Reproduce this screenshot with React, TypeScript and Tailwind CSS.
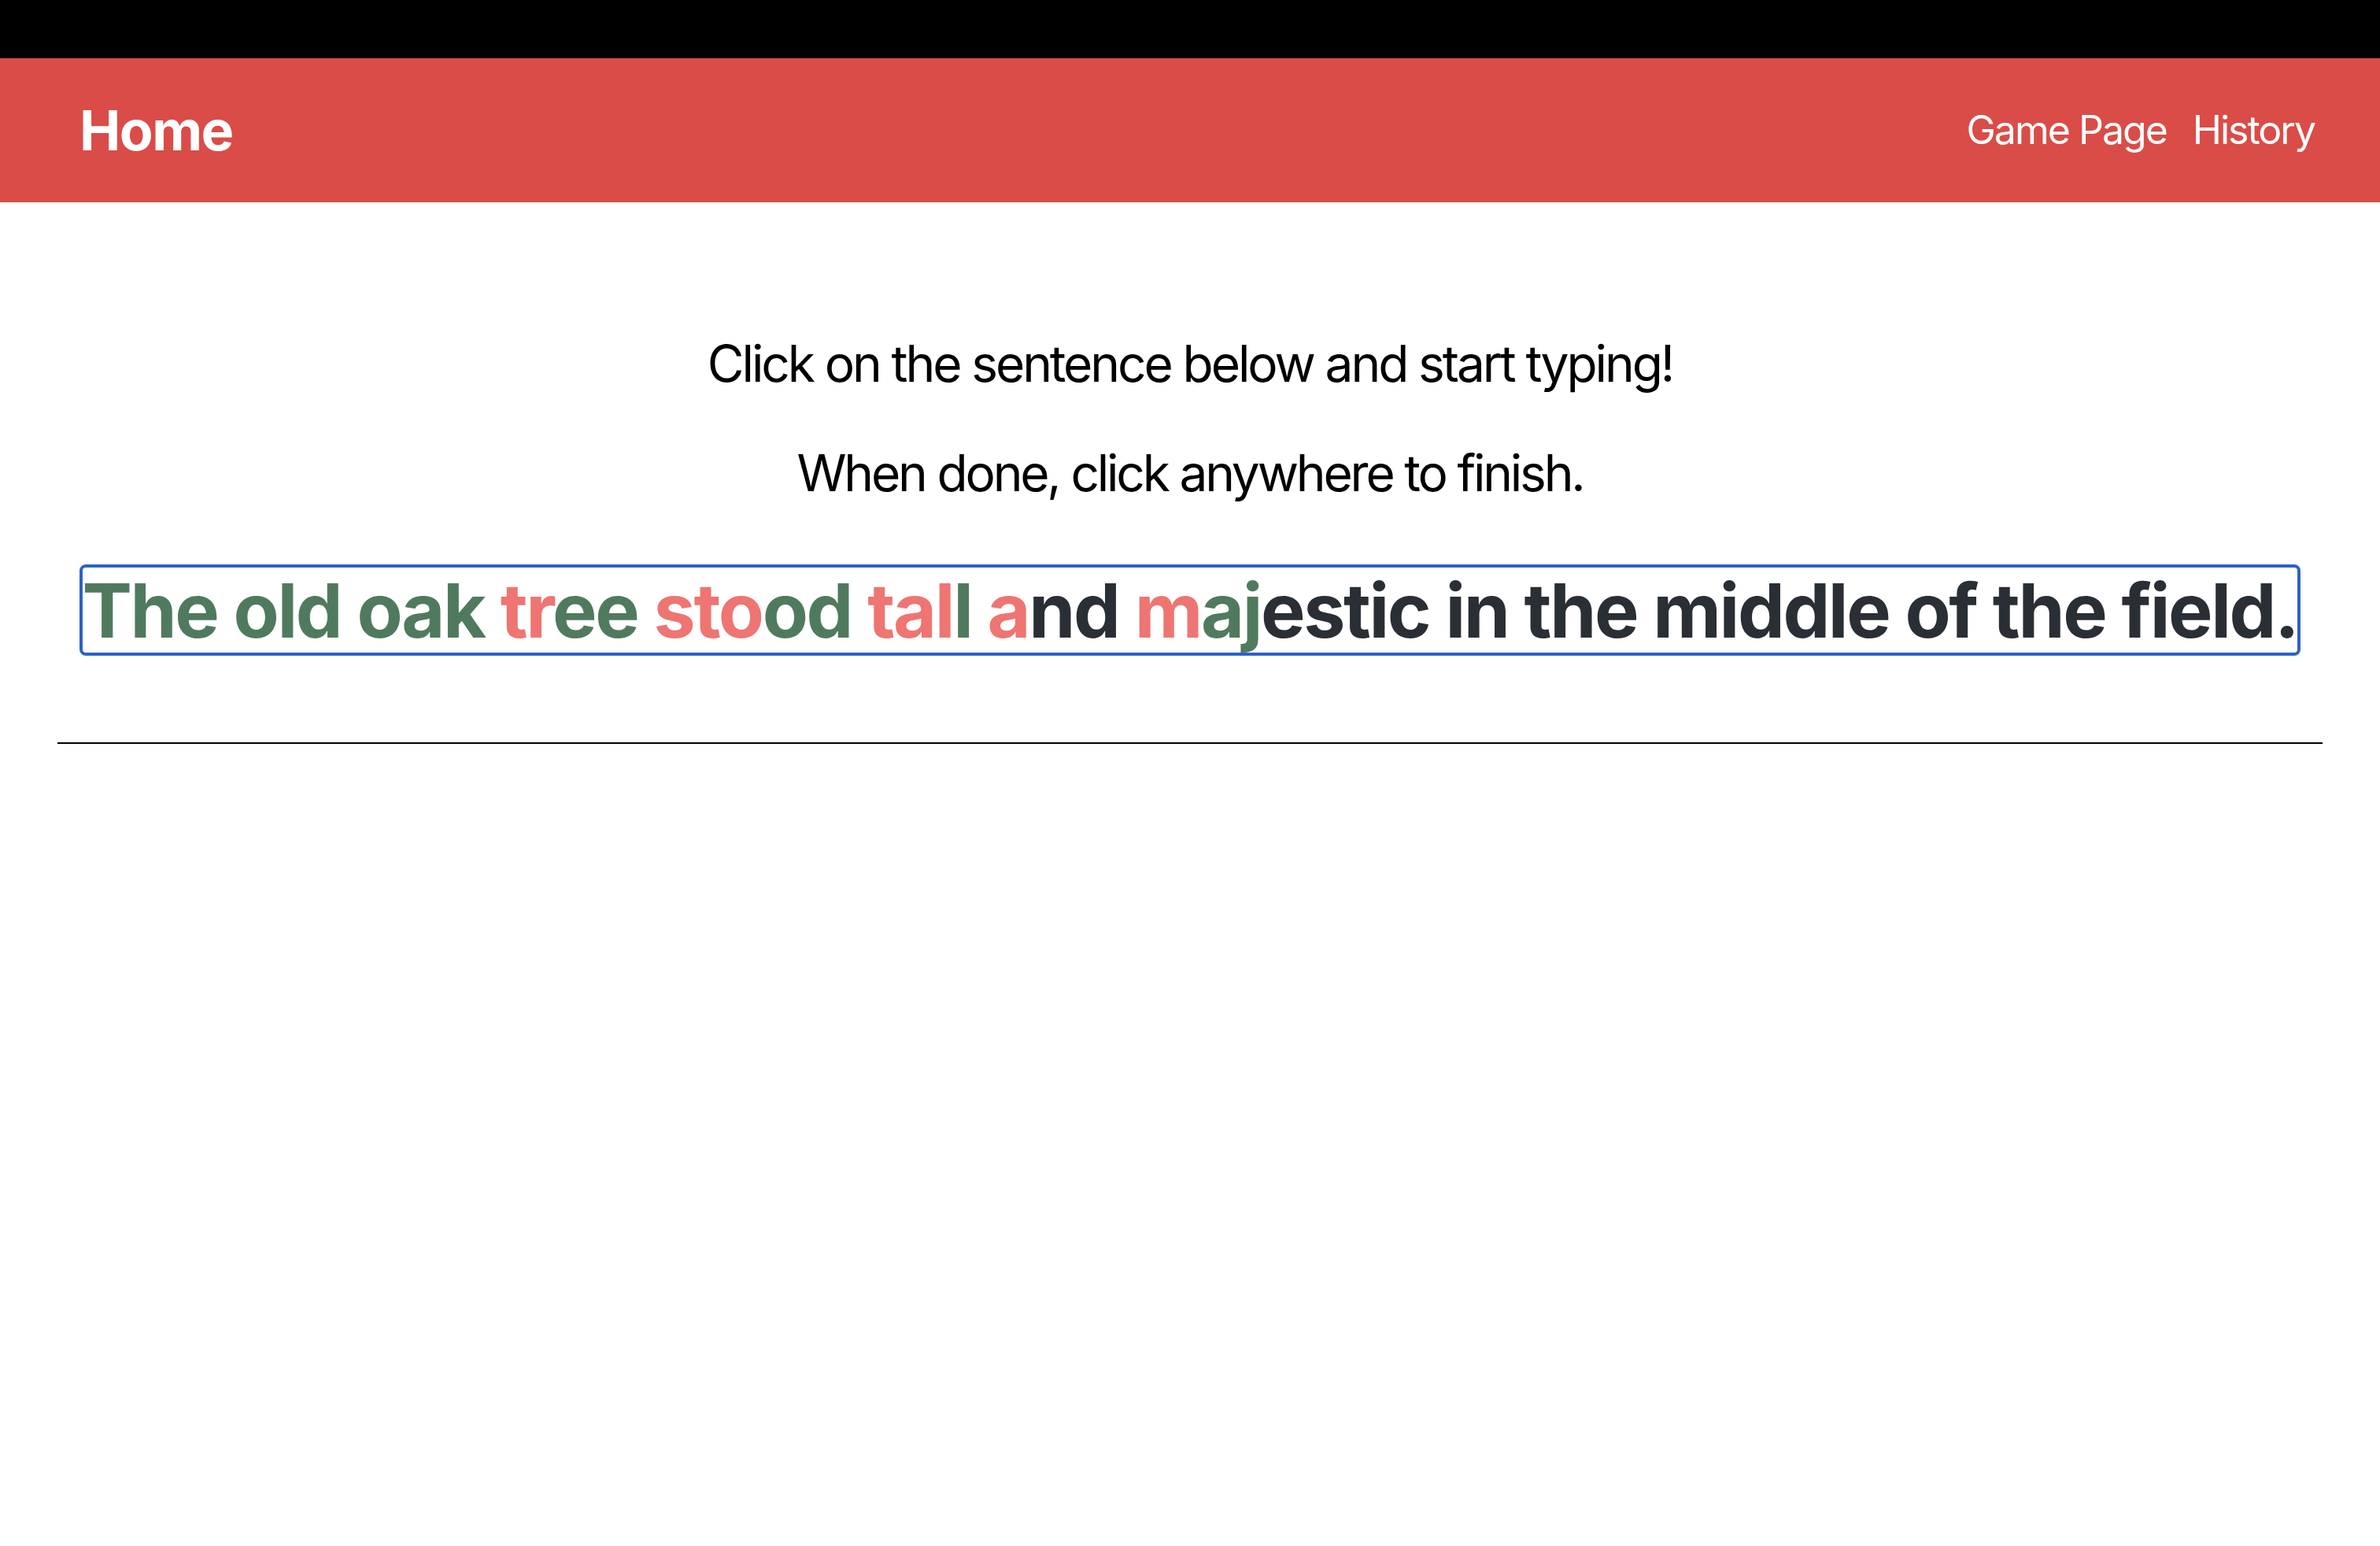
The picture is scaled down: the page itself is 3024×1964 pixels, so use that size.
const segments: { text: string; tone: "ok" | "bad" | "todo" }[] = [
  { text: "The old oak ", tone: "ok" },
  { text: "tr", tone: "bad" },
  { text: "ee ", tone: "ok" },
  { text: "sto", tone: "bad" },
  { text: "od ", tone: "ok" },
  { text: "tal", tone: "bad" },
  { text: "l ", tone: "ok" },
  { text: "a", tone: "bad" },
  { text: "nd ", tone: "todo" },
  { text: "m", tone: "bad" },
  { text: "aj", tone: "ok" },
  { text: "estic in the middle of the field.", tone: "todo" },
];

const toneClass = {
  ok: "text-[#507a5e]",
  bad: "text-[#ee7572]",
  todo: "text-[#2a2e35]",
};

export default function App() {
  return (
    <div className="min-h-screen bg-white font-['Inter','Liberation_Sans',sans-serif]">
      <div className="h-[74px] bg-black" />

      {/* Navbar */}
      <nav className="flex h-[183px] items-center justify-between bg-[#da4c47] pl-[101px] pr-[83px] text-white">
        <a className="text-[70px] font-bold tracking-[-1.5px]">Home</a>
        <div className="flex items-center gap-[33px] text-[50px] tracking-[-2px]">
          <a>Game Page</a>
          <a>History</a>
        </div>
      </nav>

      <main className="text-center">
        <p className="mt-[167px] text-[64px] leading-[1.2] tracking-[-3.1px] text-black">
          Click on the sentence below and start typing!
        </p>
        <p className="mt-[62px] text-[64px] leading-[1.2] tracking-[-3.2px] text-black">
          When done, click anywhere to finish.
        </p>

        <div className="mx-auto mt-[77px] w-fit rounded-[8px] border-[4px] border-[#2c62c9] pt-[2px] text-[95px] font-bold leading-[106px] tracking-[-2.4px] whitespace-nowrap">
          {segments.map((s, i) => (
            <span key={i} className={toneClass[s.tone]}>
              {s.text}
            </span>
          ))}
        </div>
      </main>

      <hr className="mx-[73px] mt-[110px] border-t-[2px] border-black" />
    </div>
  );
}
